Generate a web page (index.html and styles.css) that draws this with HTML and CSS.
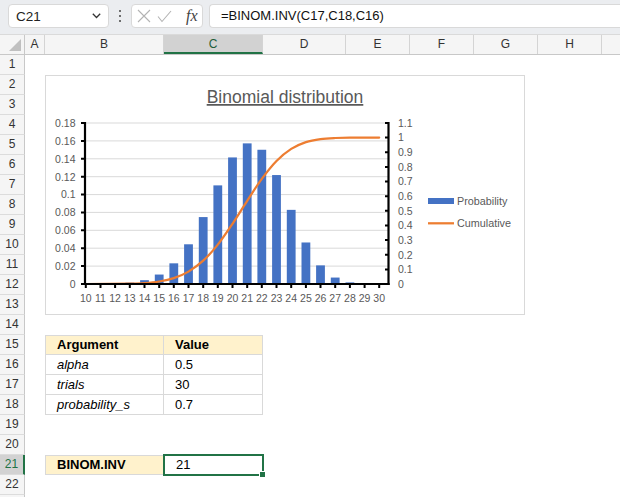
FILE: index.html
```html
<!DOCTYPE html>
<html>
<head>
<meta charset="utf-8">
<link rel="stylesheet" href="styles.css">
</head>
<body>
<div class="app">
  <div class="fbar">
    <div class="namebox"><span>C21</span>
      <svg class="chev" width="9" height="6" viewBox="0 0 9 6"><path d="M0.8 0.8 L4.5 4.5 L8.2 0.8" /></svg>
    </div>
    <div class="dots"><i></i><i></i><i></i></div>
    <div class="fxbox">
      <svg class="ico-x" width="14" height="14" viewBox="0 0 14 14"><path d="M1 1 L13 13 M13 1 L1 13" /></svg>
      <svg class="ico-ok" width="15" height="13" viewBox="0 0 15 13"><path d="M1 6.5 L5 11.5 L14 1" /></svg>
      <span class="fx">fx</span>
    </div>
    <div class="formula">=BINOM.INV(C17,C18,C16)</div>
  </div>

  <div class="sheet">
    <div class="row colhdr">
      <div class="corner"><span class="tri"></span></div>
      <div class="ch ca">A</div>
      <div class="ch cb">B</div>
      <div class="ch cc sel">C</div>
      <div class="ch cd">D</div>
      <div class="ch ce">E</div>
      <div class="ch ce">F</div>
      <div class="ch ce">G</div>
      <div class="ch ce">H</div>
      <div class="ch ci"></div>
    </div>
    <div class="row"><div class="rh">1</div></div>
    <div class="row"><div class="rh">2</div></div>
    <div class="row"><div class="rh">3</div></div>
    <div class="row"><div class="rh">4</div></div>
    <div class="row"><div class="rh">5</div></div>
    <div class="row"><div class="rh">6</div></div>
    <div class="row"><div class="rh">7</div></div>
    <div class="row"><div class="rh">8</div></div>
    <div class="row"><div class="rh">9</div></div>
    <div class="row"><div class="rh">10</div></div>
    <div class="row"><div class="rh">11</div></div>
    <div class="row"><div class="rh">12</div></div>
    <div class="row"><div class="rh">13</div></div>
    <div class="row"><div class="rh">14</div></div>
    <div class="row"><div class="rh">15</div><div class="ca"></div>
      <div class="cell cb first top hd">Argument</div><div class="cell cc top hd">Value</div></div>
    <div class="row"><div class="rh">16</div><div class="ca"></div>
      <div class="cell cb first it">alpha</div><div class="cell cc">0.5</div></div>
    <div class="row"><div class="rh">17</div><div class="ca"></div>
      <div class="cell cb first it">trials</div><div class="cell cc">30</div></div>
    <div class="row"><div class="rh">18</div><div class="ca"></div>
      <div class="cell cb first it">probability_s</div><div class="cell cc">0.7</div></div>
    <div class="row"><div class="rh">19</div></div>
    <div class="row"><div class="rh">20</div></div>
    <div class="row"><div class="rh rsel">21</div><div class="ca"></div>
      <div class="cell cb first top hd">BINOM.INV</div><div class="cell cc top active">21<span class="handle"></span></div></div>
    <div class="row"><div class="rh">22</div></div>
    <div class="row"><div class="rh"></div></div>
  </div>

  <div class="chart">
    <svg width="480" height="240" viewBox="45 75 480 240">
      <rect x="45.5" y="75.5" width="479" height="239" class="frame"/>
      <text x="285" y="103" class="title">Binomial distribution</text>
      <g class="grid">
        <line x1="85" x2="388" y1="266.1" y2="266.1"/>
        <line x1="85" x2="388" y1="248.2" y2="248.2"/>
        <line x1="85" x2="388" y1="230.3" y2="230.3"/>
        <line x1="85" x2="388" y1="212.4" y2="212.4"/>
        <line x1="85" x2="388" y1="194.6" y2="194.6"/>
        <line x1="85" x2="388" y1="176.7" y2="176.7"/>
        <line x1="85" x2="388" y1="158.8" y2="158.8"/>
        <line x1="85" x2="388" y1="140.9" y2="140.9"/>
        <line x1="85" x2="388" y1="123" y2="123"/>
      </g>
      <g class="bars">
        <rect x="110.7" y="283.6" width="8.8" height="0.4"/>
        <rect x="125.4" y="282.66" width="8.8" height="1.34"/>
        <rect x="140.1" y="280.2" width="8.8" height="3.8"/>
        <rect x="154.8" y="274.55" width="8.8" height="9.45"/>
        <rect x="169.4" y="263.33" width="8.8" height="20.67"/>
        <rect x="184.1" y="244.29" width="8.8" height="39.71"/>
        <rect x="198.8" y="217.08" width="8.8" height="66.92"/>
        <rect x="213.4" y="185.38" width="8.8" height="98.62"/>
        <rect x="228.1" y="157.43" width="8.8" height="126.57"/>
        <rect x="242.8" y="143.37" width="8.8" height="140.63"/>
        <rect x="257.4" y="149.76" width="8.8" height="134.24"/>
        <rect x="272.1" y="175.05" width="8.8" height="108.95"/>
        <rect x="286.8" y="209.86" width="8.8" height="74.14"/>
        <rect x="301.5" y="242.48" width="8.8" height="41.52"/>
        <rect x="316.1" y="265.37" width="8.8" height="18.63"/>
        <rect x="330.8" y="277.56" width="8.8" height="6.44"/>
        <rect x="345.5" y="282.39" width="8.8" height="1.61"/>
        <rect x="360.2" y="283.74" width="8.8" height="0.26"/>
      </g>
      <path class="cum" d="M85.8 284 L129.8 283.7 C134.7 283.57 139.6 283.47 144.5 283.1 C149.4 282.73 154.3 282.33 159.2 281.5 C164.1 280.67 168.9 279.75 173.8 278.1 C178.7 276.45 183.6 274.5 188.5 271.6 C193.4 268.7 198.3 265.2 203.2 260.7 C208.1 256.2 212.9 250.75 217.8 244.6 C222.7 238.45 227.6 231.1 232.5 223.8 C237.4 216.5 242.3 208.28 247.2 200.8 C252.1 193.32 256.9 185.53 261.8 178.9 C266.7 172.27 271.6 166 276.5 161 C281.4 156 286.3 152.05 291.2 148.9 C296.1 145.75 301 143.73 305.9 142.1 C310.8 140.47 315.6 139.78 320.5 139.1 C325.4 138.42 330.3 138.23 335.2 138 L349.9 137.7 L379.2 137.6"/>
      <g class="axis">
        <line x1="84" x2="389.6" y1="284" y2="284"/>
        <line x1="85" x2="85" y1="122" y2="285"/>
        <line x1="388.5" x2="388.5" y1="122" y2="285"/>
        <path d="M81 284H85M81 266.1H85M81 248.2H85M81 230.3H85M81 212.4H85M81 194.6H85M81 176.7H85M81 158.8H85M81 140.9H85M81 123H85"/>
        <path d="M385 269.4H389M385 254.7H389M385 240.1H389M385 225.5H389M385 210.8H389M385 196.2H389M385 181.5H389M385 166.9H389M385 152.3H389M385 137.6H389M385 123H389"/>
        <path d="M85.8 284V288M100.5 284V288M115.1 284V288M129.8 284V288M144.5 284V288M159.2 284V288M173.8 284V288M188.5 284V288M203.2 284V288M217.8 284V288M232.5 284V288M247.2 284V288M261.8 284V288M276.5 284V288M291.2 284V288M305.9 284V288M320.5 284V288M335.2 284V288M349.9 284V288M364.6 284V288M379.2 284V288"/>
      </g>
      <g class="tl tl-left">
        <text x="75.5" y="287.8">0</text>
        <text x="75.5" y="269.9">0.02</text>
        <text x="75.5" y="252">0.04</text>
        <text x="75.5" y="234.1">0.06</text>
        <text x="75.5" y="216.2">0.08</text>
        <text x="75.5" y="198.4">0.1</text>
        <text x="75.5" y="180.5">0.12</text>
        <text x="75.5" y="162.6">0.14</text>
        <text x="75.5" y="144.7">0.16</text>
        <text x="75.5" y="126.8">0.18</text>
      </g>
      <g class="tl tl-right">
        <text x="398" y="287.8">0</text>
        <text x="398" y="273.2">0.1</text>
        <text x="398" y="258.5">0.2</text>
        <text x="398" y="243.9">0.3</text>
        <text x="398" y="229.3">0.4</text>
        <text x="398" y="214.6">0.5</text>
        <text x="398" y="200">0.6</text>
        <text x="398" y="185.3">0.7</text>
        <text x="398" y="170.7">0.8</text>
        <text x="398" y="156.1">0.9</text>
        <text x="398" y="141.4">1</text>
        <text x="398" y="126.8">1.1</text>
      </g>
      <g class="tl tl-x">
        <text x="85.8" y="301.8">10</text>
        <text x="100.5" y="301.8">11</text>
        <text x="115.1" y="301.8">12</text>
        <text x="129.8" y="301.8">13</text>
        <text x="144.5" y="301.8">14</text>
        <text x="159.2" y="301.8">15</text>
        <text x="173.8" y="301.8">16</text>
        <text x="188.5" y="301.8">17</text>
        <text x="203.2" y="301.8">18</text>
        <text x="217.8" y="301.8">19</text>
        <text x="232.5" y="301.8">20</text>
        <text x="247.2" y="301.8">21</text>
        <text x="261.8" y="301.8">22</text>
        <text x="276.5" y="301.8">23</text>
        <text x="291.2" y="301.8">24</text>
        <text x="305.9" y="301.8">25</text>
        <text x="320.5" y="301.8">26</text>
        <text x="335.2" y="301.8">27</text>
        <text x="349.9" y="301.8">28</text>
        <text x="364.6" y="301.8">29</text>
        <text x="379.2" y="301.8">30</text>
      </g>
      <rect x="428" y="198" width="26" height="6" class="lg-bar"/>
      <line x1="428" x2="454" y1="223.3" y2="223.3" class="lg-line"/>
      <text x="457" y="204.6" class="lg">Probability</text>
      <text x="457" y="227.2" class="lg">Cumulative</text>
    </svg>
  </div>
</div>
</body>
</html>
```

FILE: styles.css
```css
html, body {
  margin: 0;
  padding: 0;
}
body {
  width: 620px;
  height: 497px;
  overflow: hidden;
  background: #ffffff;
  font-family: "Liberation Sans", Arial, sans-serif;
  color: #000;
}
.app {
  position: relative;
  width: 620px;
  height: 497px;
}

/* formula bar */
.fbar {
  height: 35px;
  box-sizing: border-box;
  background: #ebedf0;
  display: flex;
  align-items: flex-start;
  padding: 4px 0 0 8px;
  border-bottom: 1px solid #dadada;
}
.namebox {
  width: 101px;
  height: 24px;
  box-sizing: border-box;
  background: #fff;
  border: 1px solid #d9d9d9;
  border-radius: 4px;
  display: flex;
  align-items: center;
  justify-content: space-between;
  padding: 0 7px 0 7px;
  font-size: 13.5px;
  color: #222;
}
.chev path {
  fill: none;
  stroke: #333;
  stroke-width: 1.3;
}
.dots {
  width: 22px;
  height: 24px;
  display: flex;
  flex-direction: column;
  align-items: center;
  justify-content: center;
  gap: 2.5px;
}
.dots i {
  display: block;
  width: 2.6px;
  height: 2.6px;
  border-radius: 50%;
  background: #444;
}
.fxbox {
  width: 72px;
  height: 24px;
  box-sizing: border-box;
  background: #fff;
  border: 1px solid #d9d9d9;
  border-radius: 4px;
  display: flex;
  align-items: center;
}
.ico-x {
  margin-left: 5px;
}
.ico-x path, .ico-ok path {
  fill: none;
  stroke: #b3b3b3;
  stroke-width: 1.1;
}
.ico-ok {
  margin-left: 6px;
}
.fx {
  margin-left: 14px;
  font-family: "Liberation Serif", "DejaVu Serif", serif;
  font-style: italic;
  font-size: 16px;
  color: #444;
  line-height: 1;
}
.formula {
  flex: 1;
  height: 24px;
  box-sizing: border-box;
  margin-left: 6px;
  background: #fff;
  border: 1px solid #d9d9d9;
  border-right: none;
  border-radius: 4px 0 0 4px;
  padding-left: 11px;
  font-size: 13px;
  line-height: 22px;
  color: #111;
}

/* sheet */
.row {
  display: flex;
  height: 20px;
}
.colhdr {
  background: #f5f5f5;
  border-bottom: 1px solid #c8c8c8;
  height: 20px;
  box-sizing: border-box;
}
.corner {
  width: 25px;
  flex: none;
  box-sizing: border-box;
  border-right: 1px solid #c8c8c8;
  position: relative;
}
.tri {
  position: absolute;
  right: 3px;
  bottom: 3px;
  width: 0;
  height: 0;
  border-left: 12px solid transparent;
  border-bottom: 12px solid #c0c0c0;
}
.ch {
  flex: none;
  box-sizing: border-box;
  border-right: 1px solid #d4d4d4;
  text-align: center;
  font-size: 12px;
  line-height: 19px;
  color: #333;
}
.ca { width: 20px; flex: none; }
.cb { width: 119px; flex: none; }
.cc { width: 99px; flex: none; }
.cd { width: 83px; flex: none; }
.ce { width: 64px; flex: none; }
.ci { flex: 1; border-right: none; }
.ch.sel {
  background: #d2d2d2;
  border-bottom: 2px solid #217346;
  color: #1e5e3a;
  line-height: 18px;
}
.rh {
  width: 25px;
  flex: none;
  box-sizing: border-box;
  background: #f5f5f5;
  border-right: 1px solid #c8c8c8;
  border-bottom: 1px solid #dcdcdc;
  text-align: center;
  font-size: 12px;
  line-height: 19px;
  color: #333;
}
.rh.rsel {
  background: #d2d2d2;
  border-right: 2px solid #217346;
  color: #217346;
}

/* table cells */
.cell {
  box-sizing: border-box;
  height: 20px;
  border-right: 1px solid #d9d9d9;
  border-bottom: 1px solid #d9d9d9;
  padding-left: 11px;
  font-size: 13px;
  line-height: 19px;
  white-space: nowrap;
}
.cell.first { border-left: 1px solid #d9d9d9; }
.cell.top { border-top: 1px solid #d9d9d9; line-height: 18px; }
.cell.hd {
  background: #fff2cc;
  font-weight: bold;
}
.cell.it { font-style: italic; }
.cell.active {
  position: relative;
  outline: 2px solid #217346;
  outline-offset: -1px;
  padding-left: 12px;
}
.handle {
  position: absolute;
  right: -4px;
  bottom: -4px;
  width: 5px;
  height: 5px;
  background: #217346;
  border: 1px solid #fff;
}

/* chart */
.chart {
  position: absolute;
  left: 45px;
  top: 75px;
  width: 480px;
  height: 240px;
}
.chart svg {
  display: block;
  font-family: "Liberation Sans", Arial, sans-serif;
}
.frame {
  fill: #fff;
  stroke: #d9d9d9;
  stroke-width: 1;
}
.title {
  font-size: 17.5px;
  fill: #595959;
  text-anchor: middle;
  text-decoration: underline;
}
.grid line {
  stroke: #d9d9d9;
  stroke-width: 1;
}
.bars rect {
  fill: #4472c4;
}
.cum {
  fill: none;
  stroke: #ed7d31;
  stroke-width: 2.25;
  stroke-linejoin: round;
  stroke-linecap: round;
}
.axis line, .axis path {
  stroke: #000;
  stroke-width: 2.2;
  fill: none;
}
.axis path {
  stroke-width: 2;
}
.tl text {
  font-size: 10.5px;
  fill: #595959;
}
.tl-left text { text-anchor: end; }
.tl-right text { text-anchor: start; }
.tl-x text { text-anchor: middle; }
.lg-bar { fill: #4472c4; }
.lg-line {
  stroke: #ed7d31;
  stroke-width: 2.25;
}
.lg {
  font-size: 10.8px;
  fill: #595959;
}
```
